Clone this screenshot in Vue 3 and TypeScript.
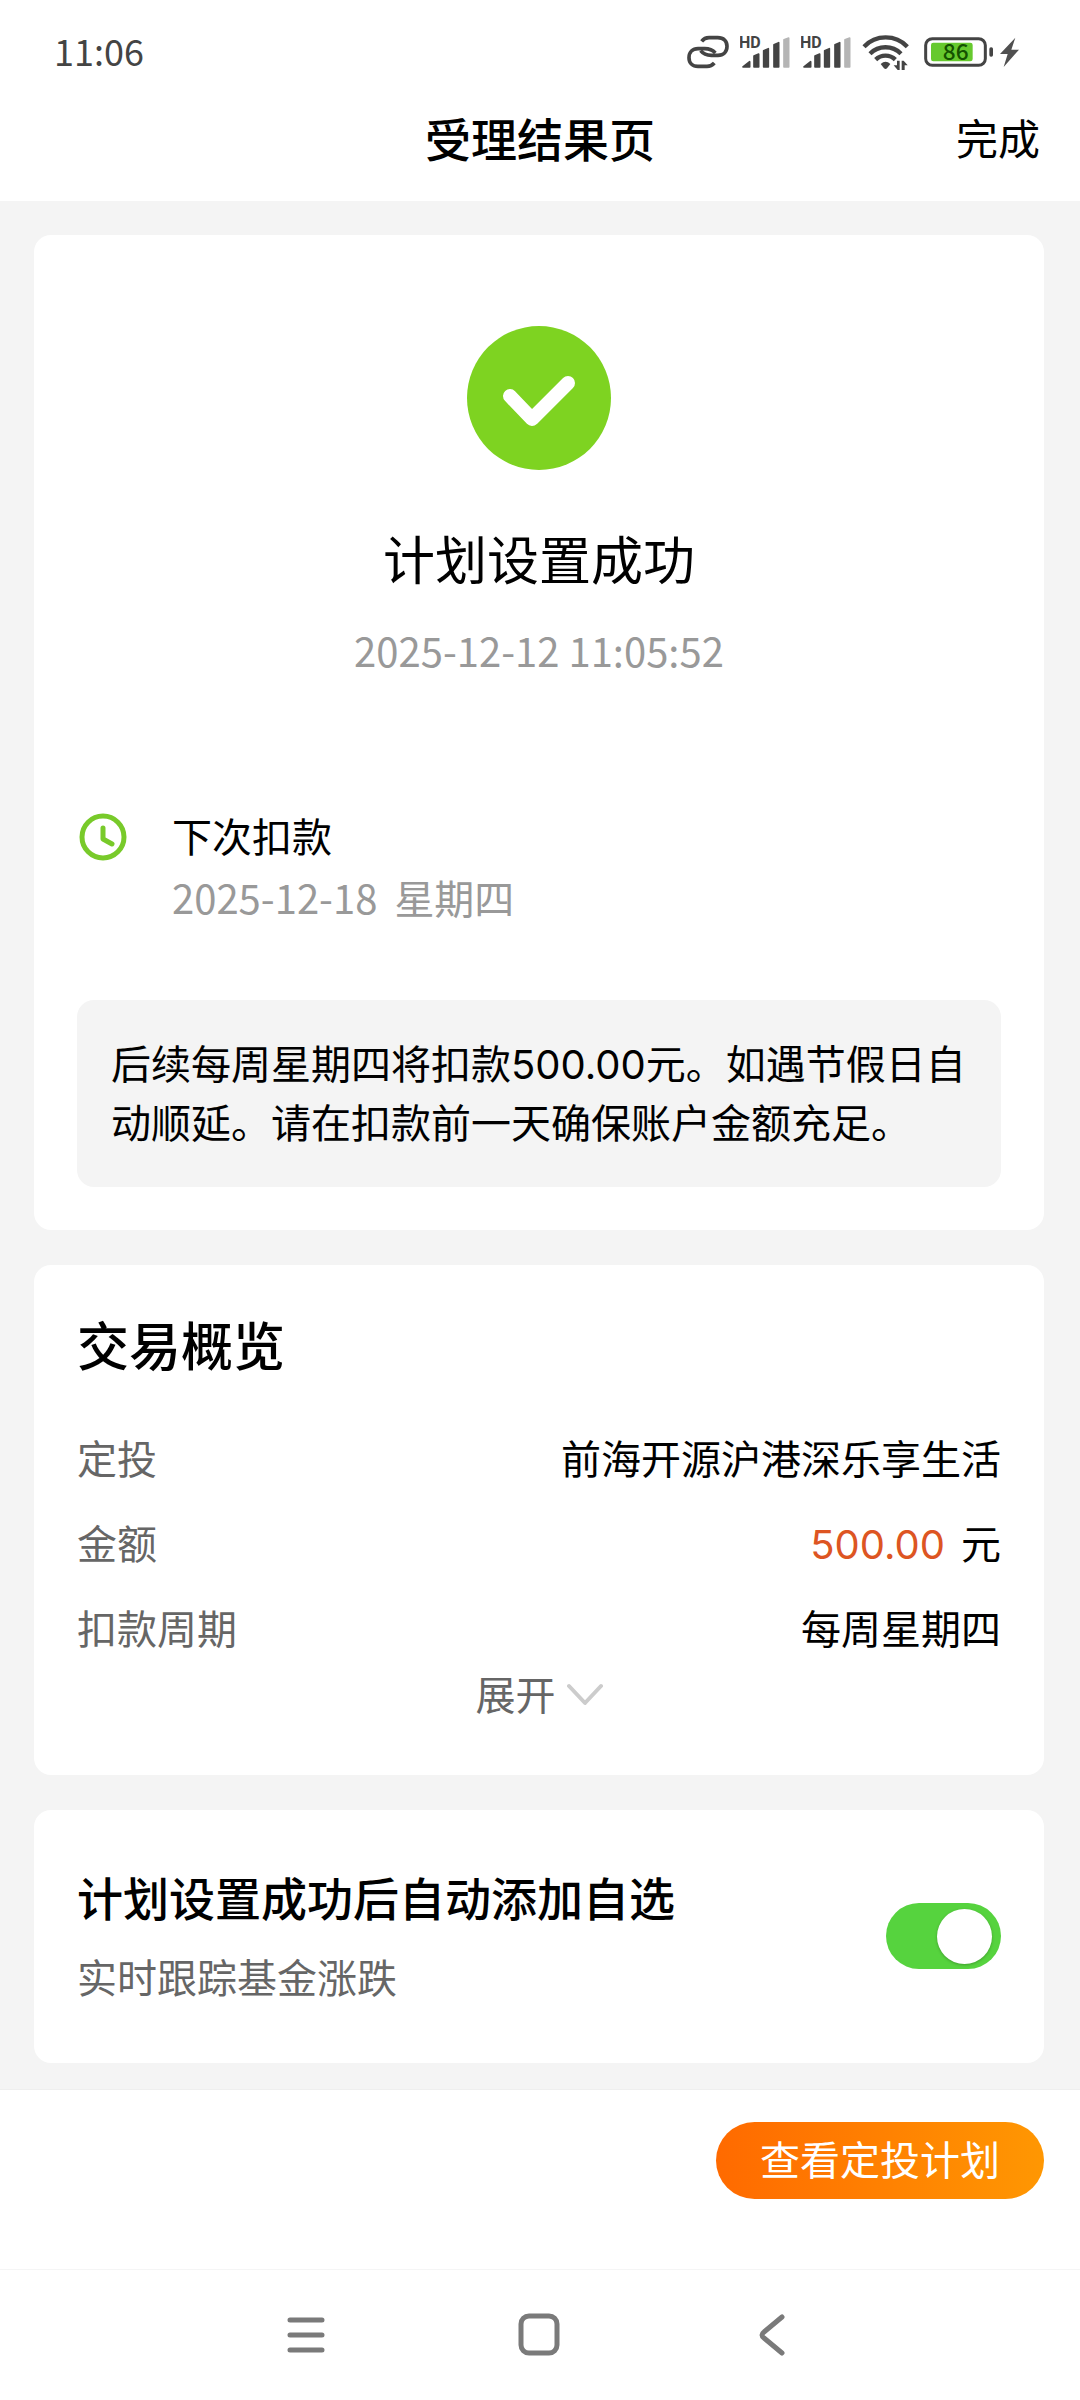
<script setup lang="ts">
import { ref } from 'vue'

interface SummaryRow {
  label: string
  value: string
  amount?: string
}

interface SignalBar {
  points: string
  faded: boolean
}

const rows: SummaryRow[] = [
  { label: '定投', value: '前海开源沪港深乐享生活' },
  { label: '金额', value: '元', amount: '500.00' },
  { label: '扣款周期', value: '每周星期四' },
]

const bars: SignalBar[] = [
  { points: '9,99 29,83 29,99', faded: false },
  { points: '42,99 42,66 56,60 56,99', faded: false },
  { points: '71,99 71,50 85,44 85,99', faded: false },
  { points: '102,99 102,32 116,26 116,99', faded: false },
  { points: '132,99 132,17 146,12 146,99', faded: true },
]

const autoAdd = ref<boolean>(true)
</script>

<template>
  <div class="page">
    <header class="top">
      <div class="status">
        <time class="clock-text">11:06</time>
        <div class="status-icons">
          <svg width="42" height="36" viewBox="80 42 126 108" aria-hidden="true">
            <g fill="none" stroke="#444" stroke-width="11" stroke-linecap="butt">
              <path d="M124 64C130 56 137 53 146 53H172C190 53 200 63 200 79C200 95 189 106 173 106H153C139 106 128 101 121 92" />
              <path d="M162 129C156 136 149 139 140 139H113C96 139 86 128 86 113C86 97 97 86 113 86H133C147 86 157 90 165 99" />
            </g>
          </svg>
          <svg v-for="n in 2" :key="n" width="50" height="36" viewBox="0 0 150 108" aria-hidden="true">
            <text class="hd" x="-3" y="42">HD</text>
            <polygon
              v-for="bar in bars"
              :key="bar.points"
              :points="bar.points"
              :fill="bar.faded ? '#b5b5b5' : '#444'"
              :stroke="bar.faded ? '#b5b5b5' : '#444'"
              stroke-width="5"
              stroke-linejoin="round"
            />
          </svg>
          <svg class="wifi" width="47" height="36" viewBox="607 42 141 108" aria-hidden="true">
            <g fill="none" stroke="#444" stroke-width="13">
              <path d="M613 80A90 90 0 0 1 743 80" />
              <path d="M631 101A66 66 0 0 1 724 101" />
              <path d="M648 119A42 42 0 0 1 707 119" />
            </g>
            <path fill="#444" d="M663 132Q678 118 692 132L682 145Q678 149 673 145Z" />
            <path fill="#444" d="M712 122H720V150H714L702 136H712ZM726 150V122H732L744 136H735V150Z" />
          </svg>
          <div class="power">
            <svg width="69" height="36" viewBox="792 42 207 108" role="img" aria-label="86%">
              <rect x="797" y="56" width="179" height="80" rx="20" fill="none" stroke="#444" stroke-width="9" />
              <rect x="813" y="68" width="125" height="56" rx="7" fill="#66c92e" />
              <rect x="988" y="82" width="11" height="28" rx="5" fill="#444" />
              <text class="level" x="887" y="121" text-anchor="middle">86</text>
            </svg>
            <svg width="19" height="36" viewBox="1020 42 57 108" aria-hidden="true">
              <path fill="#505050" d="M1066 53L1020 102H1043L1031 141L1077 89H1054Z" />
            </svg>
          </div>
        </div>
      </div>
      <div class="title-bar">
        <h1>受理结果页</h1>
        <button class="done" type="button">完成</button>
      </div>
    </header>

    <main class="content">
      <section class="card result">
        <svg class="success" width="144" height="144" viewBox="0 0 144 144" aria-hidden="true">
          <circle cx="72" cy="72" r="72" fill="#7ed321" />
          <path d="M43 70L65 93L101 57" fill="none" stroke="#fff" stroke-width="14" stroke-linecap="round" stroke-linejoin="round" />
        </svg>
        <h2 class="result-title">计划设置成功</h2>
        <time class="result-time">2025-12-12 11:05:52</time>
        <div class="next">
          <svg class="next-icon" width="52" height="52" viewBox="0 0 52 52" aria-hidden="true">
            <g fill="none" stroke="#78ca2a" stroke-width="5" stroke-linecap="round" stroke-linejoin="round">
              <circle cx="26" cy="26" r="21" />
              <path d="M26 17V28L35 33" />
            </g>
          </svg>
          <div>
            <p class="next-label">下次扣款</p>
            <p class="next-date"><time>2025-12-18</time><span>星期四</span></p>
          </div>
        </div>
        <p class="notice">后续每周星期四将扣款500.00元。如遇节假日自动顺延。请在扣款前一天确保账户金额充足。</p>
      </section>

      <section class="card summary">
        <h2>交易概览</h2>
        <dl>
          <div v-for="row in rows" :key="row.label" class="row">
            <dt>{{ row.label }}</dt>
            <dd><span v-if="row.amount" class="amount">{{ row.amount }}</span><span>{{ row.value }}</span></dd>
          </div>
        </dl>
        <button class="expand" type="button">
          <span>展开</span>
          <svg width="36" height="26" viewBox="0 0 36 26" aria-hidden="true">
            <path d="M2 6L18 23L34 6" fill="none" stroke="#ccc" stroke-width="4" stroke-linecap="round" stroke-linejoin="round" />
          </svg>
        </button>
      </section>

      <section class="card auto">
        <label for="auto-add">
          <span class="auto-title">计划设置成功后自动添加自选</span>
          <span class="auto-sub">实时跟踪基金涨跌</span>
        </label>
        <input id="auto-add" v-model="autoAdd" class="switch" type="checkbox" role="switch" />
      </section>
    </main>

    <footer class="actions">
      <button class="view-plan" type="button">查看定投计划</button>
    </footer>

    <nav class="system-nav" aria-label="系统导航">
      <button type="button" aria-label="最近任务">
        <svg width="44" height="44" viewBox="0 0 44 44">
          <path d="M5 7H37M5 22H37M5 37H37" fill="none" stroke="#7a7a7a" stroke-width="5" stroke-linecap="round" />
        </svg>
      </button>
      <button type="button" aria-label="主屏幕">
        <svg width="44" height="44" viewBox="0 0 44 44">
          <rect x="3" y="3" width="36" height="37" rx="8" fill="none" stroke="#7a7a7a" stroke-width="5" />
        </svg>
      </button>
      <button type="button" aria-label="返回">
        <svg width="44" height="44" viewBox="0 0 44 44">
          <path d="M31 4L13 19Q9 22 13 25L31 40" fill="none" stroke="#7a7a7a" stroke-width="5" stroke-linecap="round" stroke-linejoin="round" />
        </svg>
      </button>
    </nav>
  </div>
</template>

<style>
body {
  margin: 0;
  background: #fff;
}
</style>

<style scoped>
.page {
  font-family: "Noto Sans CJK SC", sans-serif;
  font-size: 40px;
  color: #000;
  background: #fff;
}

h1,
h2,
p,
dl,
dd {
  margin: 0;
}

button {
  padding: 0;
  border: 0;
  background: none;
  font: inherit;
  color: inherit;
  cursor: pointer;
}

svg {
  display: block;
  flex: none;
}

.status {
  display: flex;
  align-items: flex-start;
  justify-content: space-between;
  padding: 34px 61px 34px 54px;
}

.clock-text {
  font-size: 36px;
  line-height: 32px;
  color: #444;
}

.status-icons {
  display: flex;
  align-items: center;
  gap: 11px;
}

.wifi {
  margin-right: 4px;
}

.power {
  display: flex;
  gap: 7px;
}

.hd {
  font: 700 48px Roboto, sans-serif;
  fill: #444;
}

.level {
  font: 500 68px "Noto Sans CJK SC", sans-serif;
  fill: #145200;
}

.title-bar {
  display: grid;
  grid-template-columns: 1fr auto 1fr;
  align-items: center;
  padding: 0 40px 31px;
  line-height: 66px;
}

.title-bar h1 {
  grid-column: 2;
  font-size: 46px;
  font-weight: 500;
}

.done {
  justify-self: end;
  font-size: 42px;
}

.content {
  display: flex;
  flex-direction: column;
  gap: 35px;
  padding: 34px 36px 26px 34px;
  background: #f4f4f4;
}

.card {
  padding: 0 43px;
  border-radius: 17px;
  background: #fff;
}

.result {
  display: flex;
  flex-direction: column;
  align-items: center;
  padding-top: 91px;
  padding-bottom: 43px;
}

.result-title {
  margin-top: 50px;
  font-size: 52px;
  font-weight: 400;
  line-height: 76px;
}

.result-time {
  margin-top: 24px;
  line-height: 60px;
  color: #999;
}

.next {
  display: flex;
  align-self: stretch;
  gap: 43px;
  margin-top: 124px;
  line-height: 62px;
}

.next-icon {
  margin-top: 7px;
}

.next-date {
  display: flex;
  gap: 17px;
  color: #999;
}

.notice {
  align-self: stretch;
  margin-top: 72px;
  padding: 35px 34px 34px;
  border-radius: 17px;
  background: #f4f4f4;
  font-family: Inter, "Noto Sans CJK SC", sans-serif;
  line-height: 59px;
}

.summary {
  padding-top: 41px;
  padding-bottom: 59px;
}

.summary h2 {
  margin-bottom: 33px;
  font-size: 52px;
  font-weight: 500;
  line-height: 76px;
}

.row {
  display: flex;
  justify-content: space-between;
  height: 85px;
  line-height: 85px;
}

.row dt {
  color: #666;
}

.row dd {
  display: flex;
  align-items: baseline;
  gap: 16px;
}

.amount {
  font-family: Inter, "Noto Sans CJK SC", sans-serif;
  color: #dd5522;
}

.expand {
  display: flex;
  align-items: center;
  gap: 11px;
  margin: 0 auto;
  line-height: 46px;
  color: #666;
}

.auto {
  display: flex;
  align-items: center;
  justify-content: space-between;
  padding-top: 46px;
  padding-bottom: 47px;
  line-height: 80px;
}

.auto-title,
.auto-sub {
  display: block;
}

.auto-title {
  font-size: 46px;
  font-weight: 500;
}

.auto-sub {
  color: #666;
}

.switch {
  appearance: none;
  display: flex;
  align-items: center;
  flex: none;
  box-sizing: border-box;
  width: 115px;
  height: 66px;
  margin: 0;
  padding: 0 9px;
  border-radius: 33px;
  background: #ccc;
  cursor: pointer;
}

.switch::before {
  content: "";
  width: 55px;
  height: 55px;
  border-radius: 50%;
  background: #fff;
  box-shadow: 0 1px 3px rgba(0, 0, 0, 0.25);
}

.switch:checked {
  justify-content: flex-end;
  background: #56d33e;
}

.actions {
  display: flex;
  justify-content: flex-end;
  padding: 32px 36px 70px;
  border-top: 1px solid #eee;
}

.view-plan {
  height: 77px;
  padding: 0 44px 4px;
  border-radius: 39px;
  background: linear-gradient(90deg, #ff6a00, #ff9702);
  line-height: 73px;
  color: #fff;
}

.system-nav {
  display: flex;
  align-items: center;
  justify-content: center;
  gap: 173px;
  height: 130px;
  border-top: 1px solid #f5f5f5;
}

.system-nav button {
  display: grid;
  place-items: center;
  width: 60px;
  height: 60px;
}
</style>
